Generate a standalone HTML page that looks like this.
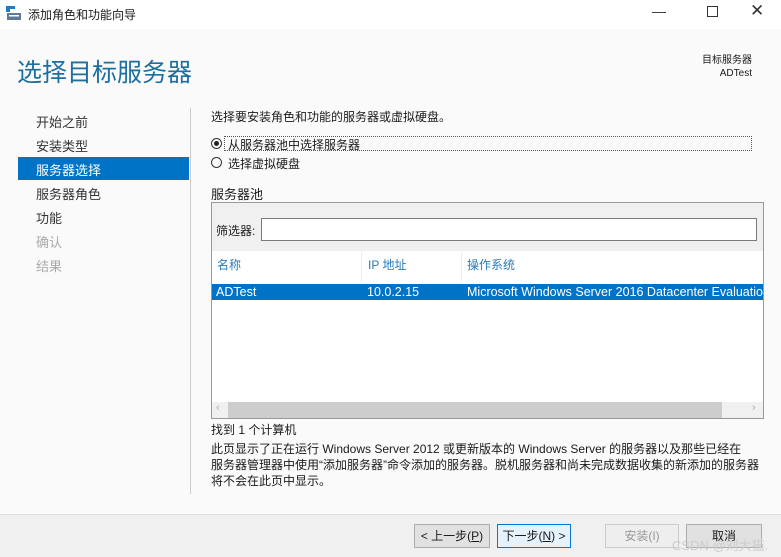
<!DOCTYPE html>
<html><head><meta charset="utf-8"><style>
*{margin:0;padding:0;box-sizing:border-box}
body{width:781px;height:557px;background:#fafafa;font-family:"Liberation Sans","Noto Sans CJK SC",sans-serif;font-size:12px;color:#1a1a1a;position:relative;overflow:hidden}
.a{position:absolute;white-space:nowrap}
.nav{position:absolute;left:36px;font-size:13px;color:#333}
.btn{position:absolute;top:524px;height:24px;border:1px solid #adadad;background:#e1e1e1;font-size:12px;text-align:center;line-height:22px}
</style></head><body>
<div class="a" style="left:0;top:0;width:781px;height:29px;background:#fff"></div>
<svg class="a" style="left:6px;top:5px" width="16" height="16"><rect x="0" y="1" width="4" height="6" fill="#1e7bc4"/><rect x="4" y="1" width="5" height="3" fill="#1e7bc4"/><rect x="1" y="8" width="14" height="7" fill="#5e7a95"/><rect x="3" y="10" width="10" height="1.5" fill="#fff"/></svg>
<div class="a" style="left:28px;top:6px;font-size:12px">添加角色和功能向导</div>
<div class="a" style="left:652px;top:3px;font-size:14px;color:#333">—</div>
<div class="a" style="left:707px;top:6px;width:11px;height:11px;border:1px solid #333"></div>
<div class="a" style="left:750px;top:1px;font-size:17px;color:#333">✕</div>
<div class="a" style="left:17px;top:53px;font-size:25px;color:#1e6fa0">选择目标服务器</div>
<div class="a" style="left:680px;top:54px;font-size:10px;text-align:right;width:72px;line-height:13px">目标服务器<br>ADTest</div>
<div class="nav" style="top:112px">开始之前</div>
<div class="nav" style="top:136px">安装类型</div>
<div class="a" style="left:18px;top:157px;width:171px;height:23px;background:#0173c7"></div>
<div class="nav" style="top:160px;color:#fff">服务器选择</div>
<div class="nav" style="top:184px">服务器角色</div>
<div class="nav" style="top:208px">功能</div>
<div class="nav" style="top:232px;color:#aaa">确认</div>
<div class="nav" style="top:256px;color:#aaa">结果</div>
<div class="a" style="left:190px;top:108px;width:1px;height:386px;background:#ccc"></div>
<div class="a" style="left:211px;top:108px">选择要安装角色和功能的服务器或虚拟硬盘。</div>
<div class="a" style="left:211px;top:138px;width:11px;height:11px;border:1px solid #333;border-radius:50%"><div style="margin:2px;width:5px;height:5px;background:#222;border-radius:50%"></div></div>
<div class="a" style="left:224px;top:136px;width:528px;height:15px;border:1px dotted #555"></div>
<div class="a" style="left:228px;top:136px;font-size:12px">从服务器池中选择服务器</div>
<div class="a" style="left:211px;top:157px;width:11px;height:11px;border:1px solid #333;border-radius:50%"></div>
<div class="a" style="left:228px;top:155px">选择虚拟硬盘</div>
<div class="a" style="left:211px;top:184px;font-size:13px">服务器池</div>
<div class="a" style="left:211px;top:202px;width:553px;height:217px;border:1px solid #999;background:#fff"></div>
<div class="a" style="left:212px;top:203px;width:551px;height:48px;background:#f0f0f0"></div>
<div class="a" style="left:216px;top:222px">筛选器:</div>
<div class="a" style="left:261px;top:218px;width:496px;height:23px;border:1px solid #7a7a7a;background:#fff"></div>
<div class="a" style="left:361px;top:252px;width:1px;height:30px;background:#eee"></div>
<div class="a" style="left:461px;top:252px;width:1px;height:30px;background:#eee"></div>
<div class="a" style="left:217px;top:256px;color:#2a7ab8">名称</div>
<div class="a" style="left:368px;top:256px;color:#2a7ab8">IP 地址</div>
<div class="a" style="left:467px;top:256px;color:#2a7ab8">操作系统</div>
<div class="a" style="left:212px;top:284px;width:551px;height:16px;background:#0173c7"></div>
<div class="a" style="left:216px;top:285px;color:#fff;font-size:12.5px">ADTest</div>
<div class="a" style="left:367px;top:285px;color:#fff;font-size:12.5px">10.0.2.15</div>
<div class="a" style="left:467px;top:285px;color:#fff;font-size:12.5px;width:296px;overflow:hidden">Microsoft Windows Server 2016 Datacenter Evaluation</div>
<div class="a" style="left:212px;top:402px;width:551px;height:16px;background:#f0f0f0"></div>
<div class="a" style="left:228px;top:402px;width:494px;height:16px;background:#cdcdcd"></div>
<div class="a" style="left:216px;top:402px;color:#aaa;font-size:11px">‹</div>
<div class="a" style="left:752px;top:402px;color:#aaa;font-size:11px">›</div>
<div class="a" style="left:211px;top:421px">找到 1 个计算机</div>
<div class="a" style="left:211px;top:441px;line-height:16px;font-size:12px">此页显示了正在运行 Windows Server 2012 或更新版本的 Windows Server 的服务器以及那些已经在<br>服务器管理器中使用“添加服务器”命令添加的服务器。脱机服务器和尚未完成数据收集的新添加的服务器<br>将不会在此页中显示。</div>
<div class="a" style="left:0;top:514px;width:781px;height:43px;background:#f0f0f0;border-top:1px solid #ddd"></div>
<div class="btn" style="left:414px;width:76px">&lt; 上一步(<u>P</u>)</div>
<div class="btn" style="left:497px;width:74px;border-color:#0078d7;background:#e5f1fb">下一步(<u>N</u>) &gt;</div>
<div class="btn" style="left:605px;width:74px;color:#999;border-color:#ccc;background:#eee">安装(I)</div>
<div class="btn" style="left:686px;width:76px">取消</div>
<div class="a" style="left:672px;top:535px;color:#ccc;font-size:13px">CSDN @刘大猫.</div>
</body></html>
